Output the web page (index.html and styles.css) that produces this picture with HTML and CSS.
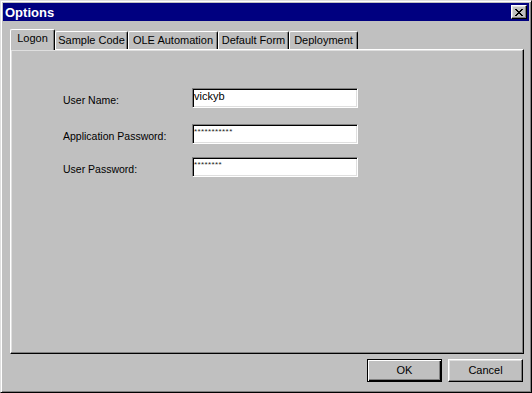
FILE: index.html
```html
<!DOCTYPE html>
<html>
<head>
<meta charset="utf-8">
<link rel="stylesheet" href="styles.css">
</head>
<body>
<div class="window">
  <div class="titlebar">
    <span class="title">Options</span>
    <div class="close">
      <svg width="8" height="7" viewBox="0 0 8 7" shape-rendering="crispEdges">
        <path fill="#000" d="M0 0h2v1H0zM6 0h2v1H6zM1 1h2v1H1zM5 1h2v1H5zM2 2h4v1H2zM3 3h2v1H3zM2 4h4v1H2zM1 5h2v1H1zM5 5h2v1H5zM0 6h2v1H0zM6 6h2v1H6z"/>
      </svg>
    </div>
  </div>
  <div class="body">
    <div class="tabs">
      <div class="tab active tab-logon">Logon</div>
      <div class="tab tab-sample">Sample Code</div>
      <div class="tab tab-ole">OLE Automation</div>
      <div class="tab tab-form">Default Form</div>
      <div class="tab tab-deploy">Deployment</div>
    </div>
    <div class="panel">
      <div class="form">
        <div class="label">User Name:</div>
        <div class="field">vickyb</div>
        <div class="label">Application Password:</div>
        <div class="field pw">***********</div>
        <div class="label">User Password:</div>
        <div class="field pw">********</div>
      </div>
    </div>
    <div class="buttons">
      <div class="btn default">OK</div>
      <div class="btn">Cancel</div>
    </div>
  </div>
</div>
</body>
</html>
```
FILE: styles.css
```css
html, body {
  margin: 0;
  padding: 0;
  background: #c0c0c0;
}
body {
  font-family: "Liberation Sans", Arial, sans-serif;
  font-size: 10.5px;
  color: #000;
}
.window {
  width: 532px;
  height: 393px;
  box-sizing: border-box;
  border: 1px solid;
  border-color: #dfdfdf #000 #000 #dfdfdf;
  box-shadow: inset 1px 1px #fff, inset -1px -1px #808080;
  padding: 2px;
  display: flex;
  flex-direction: column;
  background: #c0c0c0;
}
.titlebar {
  height: 18px;
  flex: none;
  background: #000080;
  display: flex;
  align-items: center;
  justify-content: space-between;
  padding: 0 2px;
}
.title {
  color: #fff;
  font-weight: bold;
  font-size: 13px;
  line-height: 15px;
}
.close {
  width: 16px;
  height: 14px;
  box-sizing: border-box;
  border: 1px solid;
  border-color: #fff #000 #000 #fff;
  box-shadow: inset -1px -1px #808080, inset 1px 1px #dfdfdf;
  background: #c0c0c0;
  display: flex;
  align-items: center;
  justify-content: center;
}
.close svg {
  display: block;
}
.body {
  flex: 1;
  padding: 8px 5px 0 7px;
  display: flex;
  flex-direction: column;
}
.tabs {
  display: flex;
  align-items: flex-end;
  height: 20px;
  flex: none;
}
.tab {
  height: 18px;
  box-sizing: border-box;
  border: 1px solid;
  border-color: #fff #000 transparent #fff;
  border-bottom: none;
  border-radius: 2px 2px 0 0;
  box-shadow: inset -1px 0 #808080;
  text-align: center;
  padding-top: 2px;
  font-size: 11px;
  line-height: 13px;
  white-space: nowrap;
  background: #c0c0c0;
}
.tab.active {
  height: 21px;
  margin-bottom: -1px;
  position: relative;
  z-index: 1;
}
.tab-logon { width: 45px; }
.tab-sample { width: 73px; }
.tab-ole { width: 90px; }
.tab-form { width: 71px; }
.tab-deploy { width: 69px; }
.panel {
  height: 305px;
  flex: none;
  box-sizing: border-box;
  border: 1px solid;
  border-color: #fff #000 #000 #fff;
  box-shadow: inset -1px -1px #808080, inset 1px 1px #dfdfdf;
  padding: 38px 0 0 52px;
}
.form {
  display: grid;
  grid-template-columns: 129px 166px;
  grid-template-rows: 36px 33px 20px;
}
.label {
  padding-top: 6px;
  line-height: 13px;
  white-space: nowrap;
}
.field {
  height: 20px;
  box-sizing: border-box;
  border: 1px solid;
  border-color: #808080 #fff #fff #808080;
  box-shadow: inset 1px 1px #000, inset -1px -1px #dfdfdf;
  background: #fff;
  padding: 1px 1px 0;
  font-size: 11px;
  line-height: 13px;
}
.field.pw {
  font-size: 8px;
  line-height: 10px;
  letter-spacing: 0.4px;
  padding-top: 2px;
  color: #222;
}
.buttons {
  display: flex;
  justify-content: flex-end;
  gap: 6px;
  margin-top: 5px;
  padding-right: 1px;
}
.btn {
  width: 75px;
  height: 23px;
  box-sizing: border-box;
  border: 1px solid;
  border-color: #fff #000 #000 #fff;
  box-shadow: inset -1px -1px #808080, inset 1px 1px #dfdfdf;
  background: #c0c0c0;
  display: flex;
  align-items: center;
  justify-content: center;
  font-size: 11px;
  line-height: 13px;
}
.btn.default {
  border-color: #000;
  box-shadow: inset 1px 1px #fff, inset -1px -1px #000, inset -2px -2px #808080;
}
```
